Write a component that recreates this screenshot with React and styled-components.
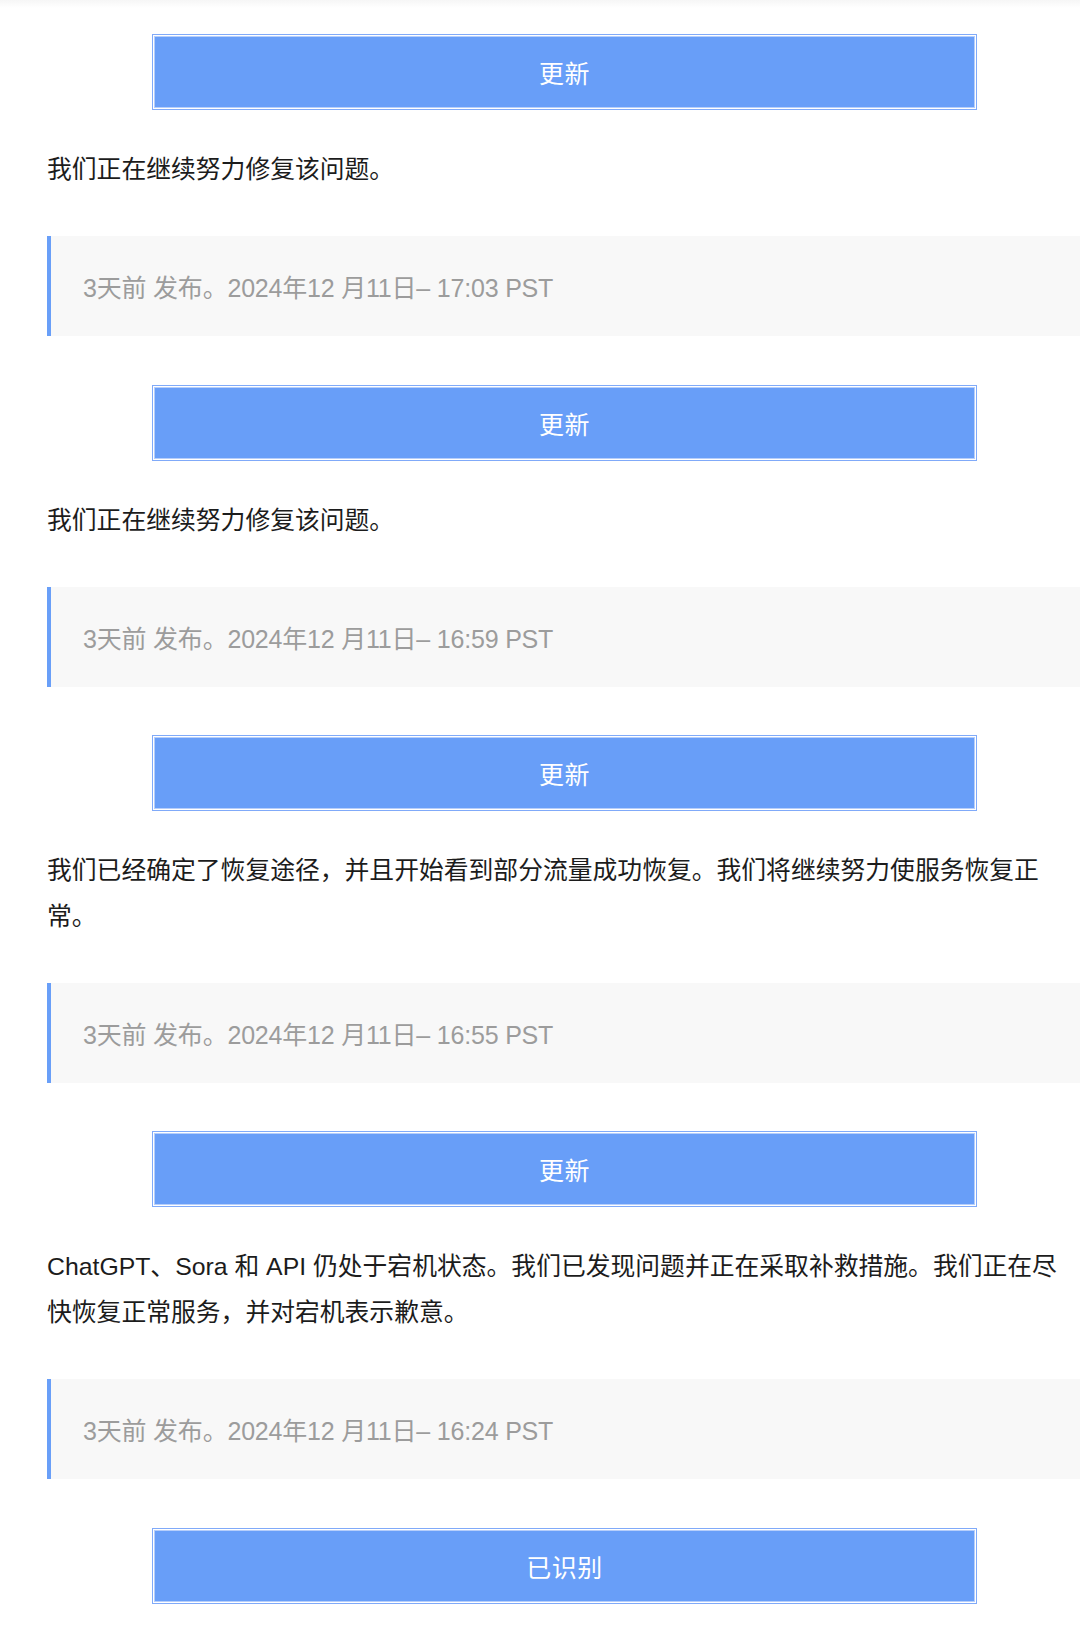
import React from "react";
import styled, { createGlobalStyle } from "styled-components";

const Global = createGlobalStyle`
  html, body { margin: 0; padding: 0; background: #fff; overflow-x: hidden; }
  body {
    font-family: "Liberation Sans", "Noto Sans CJK SC", sans-serif;
  }
`;

const Page = styled.div`
  width: 1080px;
  min-height: 1626px;
  position: relative;
  background: #fff;
  overflow: hidden;
`;

const TopShade = styled.div`
  height: 8px;
  background: linear-gradient(#f6f6f6, #ffffff);
`;

const Feed = styled.div`
  width: 1035px;
  padding: 26px 0 0 47px;
  box-sizing: content-box;
  display: flex;
  flex-direction: column;
`;

const Update = styled.section`
  display: flex;
  flex-direction: column;
  margin-bottom: 48.5px;
`;

const StatusButton = styled.div`
  width: 825px;
  height: 76px;
  box-sizing: border-box;
  margin: 0 auto;
  display: flex;
  align-items: center;
  justify-content: center;
  background: #689ef8;
  border: 1px solid #80aaf9;
  box-shadow: inset 0 0 0 1px #ffffff, inset 0 0 0 2px #b6cefb;
  color: #fff;
  font-size: 25px;
  letter-spacing: 0.5px;
`;

const Body = styled.p`
  margin: 37px 0 43.5px;
  max-width: 1018px;
  font-size: 24.8px;
  line-height: 45.6px;
  color: #1c1c1c;
`;

const Posted = styled.div`
  height: 100px;
  box-sizing: border-box;
  margin-right: -20px;
  display: flex;
  align-items: center;
  padding-left: 32px;
  background: #f8f8f8;
  border-left: 4px solid #699ff8;
  color: #9c9c9c;
  font-size: 25px;
  letter-spacing: -0.2px;
`;

const items = [
  { label: "更新", text: "我们正在继续努力修复该问题。", time: "3天前 发布。2024年12 月11日– 17:03 PST" },
  { label: "更新", text: "我们正在继续努力修复该问题。", time: "3天前 发布。2024年12 月11日– 16:59 PST" },
  {
    label: "更新",
    text: "我们已经确定了恢复途径，并且开始看到部分流量成功恢复。我们将继续努力使服务恢复正常。",
    time: "3天前 发布。2024年12 月11日– 16:55 PST",
  },
  {
    label: "更新",
    text: "ChatGPT、Sora 和 API 仍处于宕机状态。我们已发现问题并正在采取补救措施。我们正在尽快恢复正常服务，并对宕机表示歉意。",
    time: "3天前 发布。2024年12 月11日– 16:24 PST",
  },
];

export default function App() {
  return (
    <Page>
      <Global />
      <TopShade />
      <Feed>
        {items.map((it, i) => (
          <Update key={i}>
            <StatusButton>{it.label}</StatusButton>
            <Body>{it.text}</Body>
            <Posted>{it.time}</Posted>
          </Update>
        ))}
        <Update>
          <StatusButton>已识别</StatusButton>
        </Update>
      </Feed>
    </Page>
  );
}
